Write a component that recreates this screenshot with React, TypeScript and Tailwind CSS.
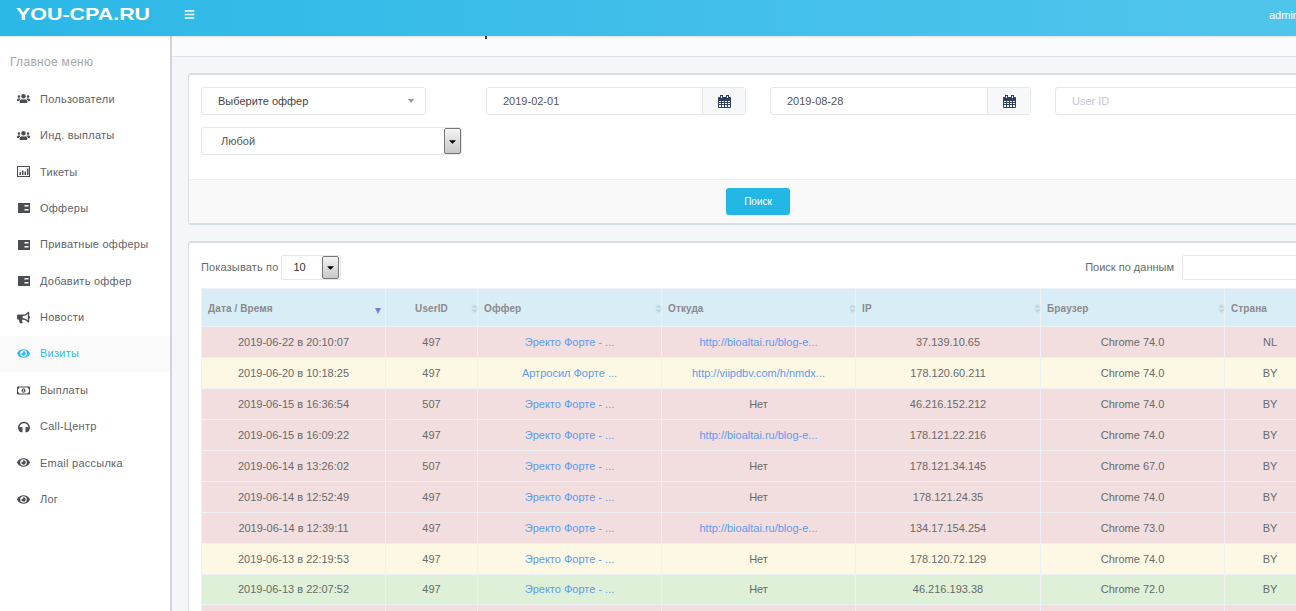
import React from "react";
import { FaUsers, FaBullhorn, FaEye, FaRegMoneyBillAlt, FaHeadphones, FaBars, FaSort, FaCaretDown } from "react-icons/fa";

function BoxChart({ className }: { className?: string }) {
  return (
    <svg viewBox="0 0 13 11" className={className} width="13" height="11">
      <rect x="0.5" y="0.5" width="12" height="10" fill="none" stroke="currentColor" />
      <rect x="2.5" y="6" width="1.5" height="3" fill="currentColor" />
      <rect x="5" y="4.5" width="1.5" height="4.5" fill="currentColor" />
      <rect x="7.5" y="5.5" width="1.5" height="3.5" fill="currentColor" />
      <rect x="10" y="2.5" width="1.5" height="6.5" fill="currentColor" />
    </svg>
  );
}

function Offer({ className }: { className?: string }) {
  return (
    <svg viewBox="0 0 12 10" className={className} width="12" height="10">
      <rect width="12" height="10" fill="currentColor" />
      <rect x="6.5" y="2" width="4" height="1.5" fill="#fff" />
      <rect x="6.5" y="6" width="4" height="1.5" fill="#fff" />
    </svg>
  );
}

function Phones() {
  return <FaHeadphones className="text-[12px]" />;
}

const menu: [string, React.ComponentType<{ className?: string }>, boolean?][] = [
  ["Пользователи", FaUsers],
  ["Инд. выплаты", FaUsers],
  ["Тикеты", BoxChart],
  ["Офферы", Offer],
  ["Приватные офферы", Offer],
  ["Добавить оффер", Offer],
  ["Новости", FaBullhorn],
  ["Визиты", FaEye, true],
  ["Выплаты", FaRegMoneyBillAlt],
  ["Call-Центр", Phones],
  ["Email рассылка", FaEye],
  ["Лог", FaEye],
];

const L1 = "http://bioaltai.ru/blog-e...";
const E = "Эректо Форте - ...";
const rows: [string, string, string, string | null, string, string, string, string][] = [
  ["2019-06-22 в 20:10:07", "497", E, L1, "37.139.10.65", "Chrome 74.0", "NL", "bg-[#f2dede] h-[31px]"],
  ["2019-06-20 в 10:18:25", "497", "Артросил Форте ...", "http://viipdbv.com/h/nmdx...", "178.120.60.211", "Chrome 74.0", "BY", "bg-[#fcf8e3] h-[31px]"],
  ["2019-06-15 в 16:36:54", "507", E, null, "46.216.152.212", "Chrome 74.0", "BY", "bg-[#f2dede] h-[31px]"],
  ["2019-06-15 в 16:09:22", "497", E, L1, "178.121.22.216", "Chrome 74.0", "BY", "bg-[#f2dede] h-[31px]"],
  ["2019-06-14 в 13:26:02", "507", E, null, "178.121.34.145", "Chrome 67.0", "BY", "bg-[#f2dede] h-[31px]"],
  ["2019-06-14 в 12:52:49", "497", E, null, "178.121.24.35", "Chrome 74.0", "BY", "bg-[#f2dede] h-[31px]"],
  ["2019-06-14 в 12:39:11", "497", E, L1, "134.17.154.254", "Chrome 73.0", "BY", "bg-[#f2dede] h-[31px]"],
  ["2019-06-13 в 22:19:53", "497", E, null, "178.120.72.129", "Chrome 74.0", "BY", "bg-[#fcf8e3] h-[31px]"],
  ["2019-06-13 в 22:07:52", "497", E, null, "46.216.193.38", "Chrome 72.0", "BY", "bg-[#dff0d8] h-[30px]"],
  ["", "", "", null, "", "", "", "bg-[#f2dede] h-[31px]"],
];

const heads: [string, number, boolean][] = [
  ["Дата / Время", 184, false],
  ["UserID", 92, true],
  ["Оффер", 184, false],
  ["Откуда", 194, false],
  ["IP", 185, false],
  ["Браузер", 184, false],
  ["Страна", 120, false],
];

function NativeArrow({ h }: { h: string }) {
  return (
    <span className={`flex w-[17px] ${h} items-center justify-center rounded-[2px] border border-[#777] bg-gradient-to-b from-[#f4f4f4] to-[#c8c8c8]`}>
      <FaCaretDown className="text-[11px] text-black" />
    </span>
  );
}

function CalendarIcon() {
  return (
    <svg viewBox="0 0 13 13" width="13" height="13" className="text-[#2f3f60]">
      <path d="M0.5 2.5H12.5V12.5H0.5Z M0.5 5.5H12.5 M0.5 7.5H12.5 M0.5 9.5H12.5 M3.5 5.5V12.5 M6.5 5.5V12.5 M9.5 5.5V12.5" fill="none" stroke="currentColor" strokeWidth="1" />
      <rect x="0.5" y="2.5" width="12" height="3" fill="currentColor" />
      <rect x="2.5" y="0.5" width="2" height="3" fill="#f7f8fa" stroke="currentColor" strokeWidth="1" />
      <rect x="8.5" y="0.5" width="2" height="3" fill="#f7f8fa" stroke="currentColor" strokeWidth="1" />
    </svg>
  );
}

function DateField({ value, w }: { value: string; w: string }) {
  return (
    <div className={`flex h-[28px] ${w} rounded-[3px] border border-[#e5e6e7]`}>
      <div className="flex flex-1 items-center pl-[16px] text-[11px] text-[#555]">{value}</div>
      <div className="flex w-[43px] items-center justify-center border-l border-[#e5e6e7] bg-[#f7f8fa]">
        <CalendarIcon />
      </div>
    </div>
  );
}

export default function App() {
  return (
    <div className="flex h-[611px] w-[1296px] flex-col overflow-hidden font-['Liberation_Sans',Arial,sans-serif] text-[11px] text-[#676a6c]">
      <header className="relative z-10 flex h-[36px] shrink-0 items-center bg-gradient-to-r from-[#2bb8e7] to-[#50c5ec] shadow-[0_1px_2px_rgba(0,0,0,0.12)]">
        <div className="w-[184px] pb-[7px] pl-[16px]">
          <div className="w-fit origin-left scale-x-[1.26] whitespace-nowrap text-[17px] font-bold leading-none text-white">YOU-CPA.RU</div>
        </div>
        <FaBars className="mb-[7px] text-[11px] text-white" />
        <div className="ml-auto w-[27px] overflow-hidden whitespace-nowrap pb-[5px] text-[11px] text-white">admin</div>
      </header>
      <div className="flex min-h-0 flex-1">
        <aside className="w-[172px] shrink-0 border-r-2 border-[#d4d4d4] bg-white">
          <div className="pb-[11.8px] pl-[10px] pt-[19px] text-[12px] leading-[14px] tracking-[0.3px] text-[#a3a7ab]">Главное меню</div>
          <ul>
            {menu.map(([label, Icon, active]) => (
              <li
                key={label}
                className={`flex h-[36.4px] items-center pl-[17px] tracking-[0.25px] ${active ? "bg-[#fafafa] text-[#2fbbe9]" : "text-[#5f6367]"}`}
              >
                <span className={`flex w-[13px] shrink-0 justify-center text-[13px] ${active ? "text-[#2fbbe9]" : "text-[#4a4e52]"}`}>
                  <Icon />
                </span>
                <span className="ml-[10px] whitespace-nowrap">{label}</span>
              </li>
            ))}
          </ul>
        </aside>
        <main className="min-w-0 flex-1 overflow-hidden bg-[#f5f6fa]">
          <div className="h-[21px] border-b border-[#dde3ea] bg-[#fafbfd] pl-[313px]">
            <div className="h-[3px] w-[2px] bg-[#33475f]" />
          </div>
          <section className="ml-[16px] mt-[16px] w-[1200px] rounded-[3px] border border-y-2 border-[#d5dfe6] bg-white">
            <div className="h-[104px] px-[12px] pt-[12px]">
              <div className="flex">
                <div className="flex h-[28px] w-[225px] items-center rounded-[3px] border border-[#e5e6e7] pl-[16px] pr-[11px] text-[11px] text-[#444]">
                  <span className="flex-1">Выберите оффер</span>
                  <span className="h-0 w-0 border-x-[3px] border-t-[4px] border-x-transparent border-t-[#999]" />
                </div>
                <div className="ml-[60px]"><DateField value="2019-02-01" w="w-[260px]" /></div>
                <div className="ml-[24px]"><DateField value="2019-08-28" w="w-[261px]" /></div>
                <div className="ml-[24px] flex h-[28px] w-[300px] items-center rounded-[3px] border border-[#e5e6e7] pl-[16px] text-[11px] text-[#c4c7d2]">User ID</div>
              </div>
              <div className="mt-[12px] flex h-[28px] w-[261px] items-center justify-between rounded-[3px] border border-[#e5e6e7] pl-[19px] text-[11px] text-[#555]">
                <span>Любой</span>
                <NativeArrow h="h-[26px]" />
              </div>
            </div>
            <div className="flex h-[44px] items-center border-t border-[#f0f0f0] bg-[#f9f9f9] pl-[537px]">
              <button className="h-[27px] w-[64px] rounded-[3px] bg-[#23b7e5] text-[10px] text-white">Поиск</button>
            </div>
          </section>
          <section className="ml-[16px] mt-[16px] w-[1200px] rounded-t-[3px] border-x border-t-2 border-[#d5dfe6] bg-white px-[12px] pt-[12px]">
            <div className="flex h-[33px] items-start justify-between">
              <div className="flex items-center">
                <span className="mr-[3px] tracking-[0.15px]">Показывать по</span>
                <div className="flex h-[25px] w-[60px] items-center justify-between rounded-[2px] border border-[#e5e6e7] pl-[11px] pr-px text-[#333]">
                  <span>10</span>
                  <NativeArrow h="h-[23px]" />
                </div>
              </div>
              <div className="flex items-center">
                <span className="mr-[8px]">Поиск по данным</span>
                <div className="h-[25px] w-[193px] rounded-[2px] border border-[#e5e6e7]" />
              </div>
            </div>
            <table className="w-[1143px] table-fixed border-collapse">
              <colgroup>
                {heads.map(([h, w]) => <col key={h} style={{ width: w }} />)}
              </colgroup>
              <thead>
                <tr className="h-[38px] bg-[#d9edf7]">
                  {heads.map(([h, , center], i) => (
                    <th key={h} className={`relative border border-[#eef1f3] px-[6px] pt-[1px] text-[10px] font-bold tracking-[0.1px] text-[#8a8a8a] ${center ? "text-center" : "text-left"}`}>
                      {h}
                      {i === 0 ? (
                        <span className="absolute right-[4px] top-[19px] h-0 w-0 border-x-[3.5px] border-t-[6px] border-x-transparent border-t-[#7a7ad8]" />
                      ) : i < 6 ? (
                        <FaSort className="absolute right-[-3px] top-[14px] text-[11px] text-[#c6d5dc]" />
                      ) : null}
                    </th>
                  ))}
                </tr>
              </thead>
              <tbody>
                {rows.map((r, i) => (
                  <tr key={i} className={r[7]}>
                    <td className="border border-[#eef1f3] text-center">{r[0]}</td>
                    <td className="border border-[#eef1f3] text-center">{r[1]}</td>
                    <td className="border border-[#eef1f3] text-center text-[#5c9bf0]">{r[2]}</td>
                    <td className={`border border-[#eef1f3] text-center ${r[3] ? "text-[#5c9bf0]" : ""}`}>{r[3] ?? (r[0] ? "Нет" : "")}</td>
                    <td className="border border-[#eef1f3] text-center">{r[4]}</td>
                    <td className="border border-[#eef1f3] text-center">{r[5]}</td>
                    <td className="border border-[#eef1f3] pr-[29px] text-center">{r[6]}</td>
                  </tr>
                ))}
              </tbody>
            </table>
          </section>
        </main>
      </div>
    </div>
  );
}
